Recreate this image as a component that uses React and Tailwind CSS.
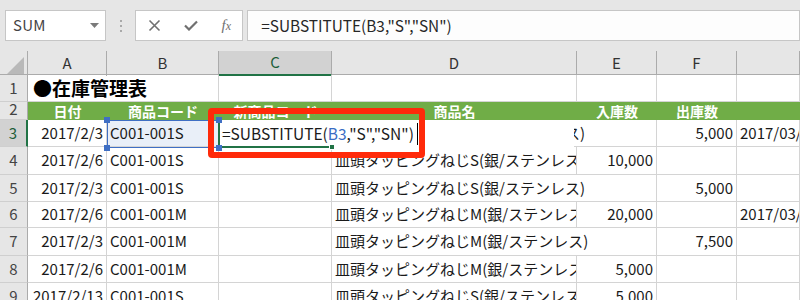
import React from "react";

const COLS = "grid grid-cols-[28px_79px_112px_113px_245px_80px_80px_63px]";
const cell = "border-r border-b border-[#d4d4d4] px-[3px] flex items-center overflow-hidden whitespace-nowrap text-[15px] text-[#1a1a1a]";
const rowHead = "flex items-center justify-center bg-[#e6e6e6] border-r border-r-[#ababab] border-b border-b-[#cfcfcf] text-[15px] text-[#444]";

const SD = "皿頭タッピングねじS(銀/ステンレス)";
const MD = "皿頭タッピングねじM(銀/ステンレス)";

const rows = [
  { n: 5, h: "h-[27px]", a: "2017/2/3", b: "C001-001S", d: SD, e: null, f: "5,000", g: "" },
  { n: 6, h: "h-[26px]", a: "2017/2/6", b: "C001-001M", d: MD, e: "20,000", f: "", g: "2017/03/" },
  { n: 7, h: "h-[28px]", a: "2017/2/3", b: "C001-001M", d: MD, e: null, f: "7,500", g: "" },
  { n: 8, h: "h-[27px]", a: "2017/2/6", b: "C001-001M", d: MD, e: "5,000", f: "", g: "" },
  { n: 9, h: "h-[27px]", a: "2017/2/13", b: "C001-001S", d: SD, e: "5,000", f: "", g: "" },
];

function DataRow({ r }) {
  return (
    <div className={`${COLS} ${r.h}`}>
      <div className={rowHead}>{r.n}</div>
      <div className={`${cell} justify-end`}>{r.a}</div>
      <div className={cell}>{r.b}</div>
      <div className={cell}></div>
      {r.e === null ? (
        <div className={`${cell} col-span-2`}>{r.d}</div>
      ) : (
        <>
          <div className={cell}>{r.d}</div>
          <div className={`${cell} justify-end`}>{r.e}</div>
        </>
      )}
      <div className={`${cell} justify-end`}>{r.f}</div>
      <div className={cell}>{r.g}</div>
    </div>
  );
}

export default function App() {
  return (
    <div className="relative w-[800px] h-[300px] overflow-hidden bg-white font-['Noto_Sans_CJK_JP','Noto_Sans',sans-serif]">
      {/* toolbar */}
      <div className="h-[51px] bg-[#e6e6e6] flex items-start pt-[10px]">
        <div className="ml-[5px] w-[102px] h-[31px] border border-[#c6c6c6] bg-white flex items-center justify-between pl-[7px] pr-[6px]">
          <span className="text-[15px] text-[#444] tracking-[0.3px]">SUM</span>
          <svg width="9" height="5" viewBox="0 0 9 5"><polygon points="0,0 9,0 4.5,5" fill="#7a7a7a" /></svg>
        </div>
        <div className="w-[30px] h-[31px] flex flex-col items-center justify-center gap-[3px]">
          <span className="w-[2px] h-[2px] bg-[#a9a9a9]"></span>
          <span className="w-[2px] h-[2px] bg-[#a9a9a9]"></span>
          <span className="w-[2px] h-[2px] bg-[#a9a9a9]"></span>
        </div>
        <div className="w-[109px] h-[31px] border border-[#c6c6c6] bg-white flex items-center pl-[12px] gap-[23px]">
          <svg width="13" height="13" viewBox="0 0 13 13"><path d="M1.5 1.5 L11.5 11.5 M11.5 1.5 L1.5 11.5" stroke="#707070" strokeWidth="1.6" fill="none" /></svg>
          <svg width="14" height="11" viewBox="0 0 14 11"><path d="M1 5.5 L5 9.5 L13 1.5" stroke="#707070" strokeWidth="2.2" fill="none" /></svg>
          <span className="font-['Liberation_Serif',serif] italic text-[#707070] text-[15px] leading-none">f<span className="text-[12px]">x</span></span>
        </div>
        <div className="ml-[4px] w-[560px] h-[31px] border border-[#c6c6c6] bg-[#fdfdfd] flex items-center pl-[13px] text-[15.4px] text-[#262626]">
          =SUBSTITUTE(B3,"S","SN")
        </div>
      </div>

      {/* column headers */}
      <div className={`${COLS} h-[24px] bg-[#e6e6e6] border-b border-[#ababab] text-[15px] text-[#333]`}>
        <div className="border-r border-[#ababab] flex items-end justify-end pr-[3px] pb-[2px]">
          <svg width="17" height="17" viewBox="0 0 17 17"><polygon points="17,0 17,17 0,17" fill="#b9b9b9" /></svg>
        </div>
        <div className="border-r border-[#ababab] flex items-center justify-center">A</div>
        <div className="border-r border-[#ababab] flex items-center justify-center">B</div>
        <div className="border-r border-[#ababab] bg-[#d2d2d2] border-b-2 border-b-[#217346] flex items-center justify-center text-[#1e5e3a]">C</div>
        <div className="border-r border-[#ababab] flex items-center justify-center">D</div>
        <div className="border-r border-[#ababab] flex items-center justify-center">E</div>
        <div className="border-r border-[#ababab] flex items-center justify-center">F</div>
        <div className="border-r border-[#ababab]"></div>
      </div>

      {/* row 1 */}
      <div className={`${COLS} h-[27px]`}>
        <div className={rowHead}>1</div>
        <div className={`${cell} col-span-2 text-[19px] font-bold text-black pl-[5px]`}>●在庫管理表</div>
        <div className={cell}></div>
        <div className={cell}></div>
        <div className={cell}></div>
        <div className={cell}></div>
        <div className={cell}></div>
      </div>

      {/* row 2 header */}
      <div className={`${COLS} h-[18px]`}>
        <div className={`${rowHead} items-start leading-[14px]`}>2</div>
        {["日付", "商品コード", "新商品コード", "商品名", "入庫数", "出庫数", ""].map((t, i) => (
          <div key={i} className="bg-[#70ad47] text-white font-bold text-[14px] leading-none flex items-center justify-center overflow-hidden whitespace-nowrap">
            {t}
          </div>
        ))}
      </div>

      {/* row 3 */}
      <div className={`${COLS} h-[27px]`}>
        <div className="flex items-center justify-center bg-[#d2d2d2] border-r-2 border-r-[#217346] border-b border-b-[#cfcfcf] text-[15px] text-[#1e5e3a]">3</div>
        <div className={`${cell} justify-end`}>2017/2/3</div>
        <div className={`${cell} bg-[#e9eff8]`}>C001-001S</div>
        <div className={cell}></div>
        <div className={`${cell} col-span-2`}>{SD}</div>
        <div className={`${cell} justify-end`}>5,000</div>
        <div className={cell}>2017/03/</div>
      </div>

      {/* row 4 */}
      <div className={`${COLS} h-[28px]`}>
        <div className={rowHead}>4</div>
        <div className={`${cell} justify-end`}>2017/2/6</div>
        <div className={cell}>C001-001S</div>
        <div className={cell}></div>
        <div className={cell}>{SD}</div>
        <div className={`${cell} justify-end`}>10,000</div>
        <div className={cell}></div>
        <div className={cell}></div>
      </div>

      {rows.map((r) => (
        <DataRow key={r.n} r={r} />
      ))}

      {/* B3 reference highlight */}
      <div className="absolute left-[107px] top-[120px] w-[113px] h-[28px] border-[1.5px] border-[#3f6fc4]"></div>

      {/* in-cell edit box */}
      <div className="absolute left-[218px] top-[120px] w-[356px] h-[28px] bg-white flex items-center">
        <div className="absolute left-0 top-0 w-[2px] h-[28px] bg-[#217346]"></div>
        <div className="absolute left-0 top-[26px] w-[112px] h-[2px] bg-[#217346]"></div>
        <div className="absolute left-[111px] top-[24px] w-[6px] h-[6px] bg-[#217346] border border-white"></div>
        <span className="pl-[4px] text-[15.5px] text-[#1a1a1a] whitespace-nowrap">
          =SUBSTITUTE(<span className="text-[#3a6cc4]">B3</span>,"S","SN")
        </span>
        <span className="ml-[3px] w-[1px] h-[22px] bg-black"></span>
      </div>

      {/* blue corner handles */}
      <div className="absolute left-[104px] top-[117px] w-[6px] h-[6px] bg-[#3f6fc4]"></div>
      <div className="absolute left-[104px] top-[145px] w-[6px] h-[6px] bg-[#3f6fc4]"></div>
      <div className="absolute left-[216px] top-[117px] w-[6px] h-[6px] bg-[#3f6fc4]"></div>
      <div className="absolute left-[216px] top-[145px] w-[6px] h-[6px] bg-[#3f6fc4]"></div>

      {/* red emphasis box */}
      <div className="absolute left-[208px] top-[108px] w-[217px] h-[50px] border-[6px] border-[#ff2a0a] rounded-[4px]"></div>
    </div>
  );
}
